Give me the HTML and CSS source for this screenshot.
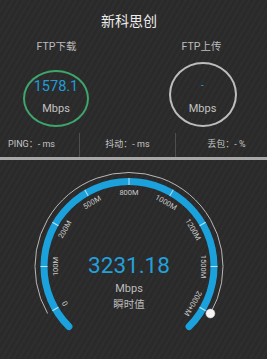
FILE: index.html
```html
<!DOCTYPE html>
<html lang="zh">
<head>
<meta charset="utf-8">
<link rel="stylesheet" href="styles.css">
</head>
<body>
<div class="screen">
  <header class="title">新科思创</header>
  <section class="ftp">
    <div class="ftp-col">
      <div class="ftp-label">FTP下载</div>
      <div class="ring ring-down">
        <div class="ring-value">1578.1</div>
        <div class="ring-unit">Mbps</div>
      </div>
    </div>
    <div class="ftp-col">
      <div class="ftp-label">FTP上传</div>
      <div class="ring ring-up">
        <div class="ring-value small">-</div>
        <div class="ring-unit">Mbps</div>
      </div>
    </div>
  </section>
  <section class="stats">
    <div class="stat stat-ping">PING：- ms</div>
    <div class="stat stat-jitter">抖动：- ms</div>
    <div class="stat stat-loss">丢包：- %</div>
  </section>
  <div class="divider-bar"></div>
  <section class="gauge">
    <svg class="gauge-svg" width="267" height="199" viewBox="0 0 267 199">
      <path class="outer-arc" d="M47.6 153.5 A94 94 0 1 1 210.4 153.5"/>
      <path class="band" d="M68.9 166.6 A85 85 0 1 1 189.1 166.6"/>
      <g class="ticks">
        <line x1="129" y1="25" x2="129" y2="18" transform="rotate(-120 129 106.5)"/>
        <line x1="129" y1="25" x2="129" y2="18" transform="rotate(-90 129 106.5)"/>
        <line x1="129" y1="25" x2="129" y2="18" transform="rotate(-60 129 106.5)"/>
        <line x1="129" y1="25" x2="129" y2="18" transform="rotate(-30 129 106.5)"/>
        <line x1="129" y1="25" x2="129" y2="18" transform="rotate(0 129 106.5)"/>
        <line x1="129" y1="25" x2="129" y2="18" transform="rotate(30 129 106.5)"/>
        <line x1="129" y1="25" x2="129" y2="18" transform="rotate(60 129 106.5)"/>
        <line x1="129" y1="25" x2="129" y2="18" transform="rotate(90 129 106.5)"/>
        <line x1="129" y1="25" x2="129" y2="18" transform="rotate(120 129 106.5)"/>
      </g>
      <g class="scale">
        <text x="129" y="32.5" transform="rotate(-120 129 106.5)">0</text>
        <text x="129" y="32.5" transform="rotate(-90 129 106.5)">100M</text>
        <text x="129" y="32.5" transform="rotate(-60 129 106.5)">200M</text>
        <text x="129" y="32.5" transform="rotate(-30 129 106.5)">500M</text>
        <text x="129" y="32.5" transform="rotate(0 129 106.5)">800M</text>
        <text x="129" y="32.5" transform="rotate(30 129 106.5)">1000M</text>
        <text x="129" y="32.5" transform="rotate(60 129 106.5)">1200M</text>
        <text x="129" y="32.5" transform="rotate(90 129 106.5)">1500M</text>
        <text x="129" y="32.5" transform="rotate(120 129 106.5)">2000+M</text>
      </g>
      <circle class="knob" cx="210.4" cy="153.5" r="4.5"/>
      <text class="g-value" x="129" y="105">3231.18</text>
      <text class="g-unit" x="129" y="128.5">Mbps</text>
      <text class="g-label" x="129" y="143.5">瞬时值</text>
    </svg>
  </section>
</div>
</body>
</html>
```

FILE: styles.css
```css
* { box-sizing: border-box; margin: 0; padding: 0; }
html, body {
  width: 267px;
  height: 359px;
  overflow: hidden;
}
body {
  background-color: #2a2a2a;
  background-image: repeating-linear-gradient(120deg, rgba(255,255,255,0.018) 0 2px, rgba(0,0,0,0) 2px 5px);
  font-family: Roboto, "Noto Sans CJK SC", sans-serif;
  color: #bdbdbd;
}
.screen {
  width: 267px;
  height: 359px;
  display: flex;
  flex-direction: column;
}
.title {
  width: 258px;
  text-align: center;
  font-size: 14px;
  line-height: 20px;
  padding-top: 11px;
  color: #ececec;
  height: 40px;
}
.ftp {
  width: 258px;
  display: flex;
  justify-content: space-between;
  height: 93px;
}
.ftp-col {
  width: 113px;
  display: flex;
  flex-direction: column;
  align-items: center;
}
.ftp-label {
  font-size: 10.5px;
  line-height: 13px;
  color: #bcbcbc;
}
.ring {
  border-radius: 50%;
  display: flex;
  flex-direction: column;
  align-items: center;
  position: relative;
}
.ring-down {
  width: 66px;
  height: 57px;
  border: 2px solid #3ea56b;
  margin-top: 17px;
  margin-right: 1px;
}
.ring-up {
  width: 68px;
  height: 65px;
  border: 2px solid #bdbdbd;
  margin-top: 9px;
  margin-left: 2px;
}
.ring-value {
  font-size: 14.5px;
  line-height: 16px;
  color: #209cd8;
}
.ring-down .ring-value { margin-top: 7px; }
.ring-value.small {
  font-size: 10px;
  margin-top: 16px;
  line-height: 12px;
}
.ring-unit {
  font-size: 11px;
  line-height: 12px;
  color: #c2c2c2;
}
.ring-down .ring-unit { margin-top: 8px; }
.ring-up .ring-unit { margin-top: 11px; }
.stats {
  display: flex;
  height: 24px;
  align-items: stretch;
}
.stat {
  font-size: 9px;
  color: #c4c4c4;
  display: flex;
  align-items: center;
  padding-bottom: 3px;
}
.stat-ping {
  width: 80px;
  padding-left: 8px;
  border-right: 1px solid #4e4e4e;
}
.stat-jitter {
  width: 96px;
  justify-content: center;
  border-right: 1px solid #4e4e4e;
}
.stat-loss {
  flex: 1;
  justify-content: center;
  padding-left: 10px;
}
.divider-bar {
  height: 3px;
  background: #a8a8a8;
}
.gauge {
  flex: 1;
}
.gauge-svg { display: block; }
.outer-arc {
  fill: none;
  stroke: #b8b8b8;
  stroke-width: 1;
}
.band {
  fill: none;
  stroke: #1ba2dd;
  stroke-width: 7;
  stroke-linecap: round;
}
.ticks line {
  stroke: #b8e4f6;
  stroke-width: 1;
}
.scale text {
  font-family: Roboto, sans-serif;
  font-size: 7.5px;
  fill: #c8c8c8;
  text-anchor: middle;
  dominant-baseline: central;
}
.knob {
  fill: #f4f4f4;
  stroke: #cfcfcf;
  stroke-width: 0.5;
}
.g-value {
  font-family: Roboto, sans-serif;
  font-size: 22.5px;
  fill: #22a0dc;
  text-anchor: middle;
  dominant-baseline: central;
}
.g-unit {
  font-family: Roboto, sans-serif;
  font-size: 11px;
  fill: #bcbcbc;
  text-anchor: middle;
  dominant-baseline: central;
}
.g-label {
  font-family: "Noto Sans CJK SC", sans-serif;
  font-size: 10.5px;
  fill: #bcbcbc;
  text-anchor: middle;
  dominant-baseline: central;
}
```
